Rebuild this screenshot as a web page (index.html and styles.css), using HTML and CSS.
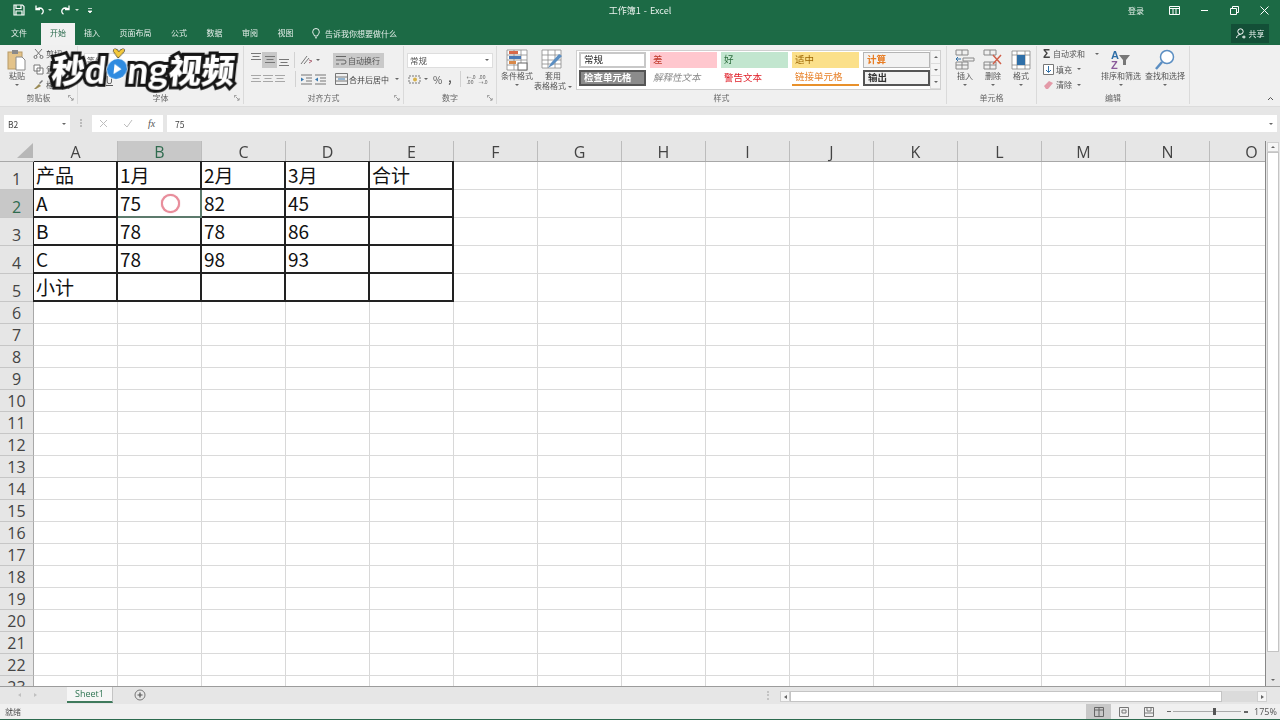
FILE: index.html
```html
<!DOCTYPE html>
<html lang="zh">
<head>
<meta charset="utf-8">
<title>工作簿1 - Excel</title>
<link rel="stylesheet" href="styles.css">
</head>
<body>
<svg class="defs" width="0" height="0">
  <symbol id="lines-c" viewBox="0 0 12 14"><path d="M1 3.500h10M2.500 6.500h7M1 9.500h10" stroke="#777" fill="none"/></symbol>
  <symbol id="launch" viewBox="0 0 7 7"><path d="M.5 3V.5H3M2 2l3.500 3.500M6 3.500V6H3.500" stroke="#777" fill="none" stroke-width=".8"/></symbol>
</svg>
<div class="app">
  <header class="titlebar">
    <div class="qat">
      <svg class="ic" width="12" height="12" viewBox="0 0 12 12"><path d="M1 1h8.500L11 2.500V11H1zM3 1v3.500h5V1M3 11V7h6v4" fill="none" stroke="#fff" stroke-width="1.200"/></svg>
      <svg class="ic undo" width="12" height="12" viewBox="0 0 12 12"><path d="M3 1.500v4h4M3.500 5.300C5 3.600 8 3.600 9.500 5.200c1.300 1.500.9 3.800-1 5" fill="none" stroke="#fff" stroke-width="1.300"/></svg>
      <i class="caret light"></i>
      <svg class="ic redo" width="12" height="12" viewBox="0 0 12 12"><path d="M9 1.500v4H5M8.500 5.300C7 3.600 4 3.600 2.500 5.200c-1.300 1.500-.9 3.800 1 5" fill="none" stroke="#fff" stroke-width="1.300"/></svg>
      <i class="caret light"></i>
      <svg class="ic qatmore" width="6" height="7" viewBox="0 0 6 7"><path d="M1 1.500h4M1 4h4L3 6z" fill="#fff" stroke="#fff" stroke-width=".7"/></svg>
    </div>
    <div class="doc-title">工作簿1 - Excel</div>
    <div class="win">
      <span class="login">登录</span>
      <span class="winbtn"><svg width="11" height="9" viewBox="0 0 11 9"><path d="M.5.500h10v8H.5zM.5 2.500h10M4 2.500v6M7 2.500v6" fill="none" stroke="#fff"/></svg></span>
      <span class="winbtn"><svg width="9" height="9" viewBox="0 0 9 9"><path d="M1 4.500h7" stroke="#fff"/></svg></span>
      <span class="winbtn"><svg width="9" height="9" viewBox="0 0 9 9"><path d="M.5 2.500h6v6h-6zM2.500 2.500V.5h6v6h-2" fill="none" stroke="#fff"/></svg></span>
      <span class="winbtn"><svg width="9" height="9" viewBox="0 0 9 9"><path d="M.5.500l8 8M8.500.500l-8 8" stroke="#fff"/></svg></span>
    </div>
  </header>

  <nav class="tabs">
    <span class="tab">文件</span>
    <span class="tab active">开始</span>
    <span class="tab">插入</span>
    <span class="tab">页面布局</span>
    <span class="tab">公式</span>
    <span class="tab">数据</span>
    <span class="tab">审阅</span>
    <span class="tab">视图</span>
    <span class="tell">
      <svg width="8" height="11" viewBox="0 0 8 11"><path d="M2.500 8C2.300 6.500.7 5.800.7 3.800a3.300 3.300 0 0 1 6.600 0C7.300 5.800 5.700 6.500 5.500 8zM3 9.800h2" fill="none" stroke="#fff" stroke-width=".9"/></svg>
      告诉我你想要做什么
    </span>
    <span class="share">
      <svg width="10" height="11" viewBox="0 0 10 11"><circle cx="4.500" cy="3.500" r="2.700" fill="none" stroke="#fff"/><path d="M.5 10c.4-2.500 2-3.500 4-3.500M6 9h3.500M8 7.500V10.500" fill="none" stroke="#fff"/></svg>
      共享
    </span>
  </nav>

  <section class="ribbon">
    <div class="group g-clip">
      <div class="g-body clip-body">
        <div class="big paste">
          <svg width="20" height="22" viewBox="0 0 20 22"><rect x="1" y="3" width="14" height="17" fill="#e3c38a" stroke="#b89a66"/><rect x="5" y="1" width="6" height="4" fill="#8a8a8a"/><path d="M9 8h6l3 3v10H9z" fill="#fff" stroke="#8a8a8a"/></svg>
          <span>粘贴</span><i class="caret"></i>
        </div>
        <div class="clip-list">
          <span class="li"><svg width="11" height="11" viewBox="0 0 11 11"><path d="M2 1l6 7M9 1L3 8" stroke="#777" fill="none"/><circle cx="2.500" cy="9" r="1.500" fill="none" stroke="#777"/><circle cx="8.500" cy="9" r="1.500" fill="none" stroke="#777"/></svg>剪切</span>
          <span class="li"><svg width="11" height="11" viewBox="0 0 11 11"><path d="M1 1h6v6H1zM4 4h6v6H4z" fill="#fff" stroke="#777"/></svg>复制</span>
          <span class="li"><svg width="11" height="11" viewBox="0 0 11 11"><path d="M1 10l5-5 2 2-5 3z" fill="#9a8a55"/><path d="M6 4l3-3 1 1-3 3z" fill="#777"/></svg>格式刷</span>
        </div>
      </div>
      <div class="g-label"><span>剪贴板</span><svg class="launch"><use href="#launch"/></svg></div>
    </div>

    <div class="group g-font">
      <div class="g-body stack">
        <div class="r"><span class="box fontname">等线</span><span class="box fontsize">11</span></div>
        <div class="r font-tools"><b>B</b><em>I</em><u>U</u><span class="swatch yellow"></span><span class="swatch red"></span></div>
      </div>
      <div class="g-label"><span>字体</span><svg class="launch"><use href="#launch"/></svg></div>
    </div>

    <div class="group g-align">
      <div class="g-body stack">
        <div class="r">
          <svg class="i14 up"><use href="#lines-c"/></svg>
          <span class="pressed"><svg class="i14"><use href="#lines-c"/></svg></span>
          <svg class="i14 down"><use href="#lines-c"/></svg>
          <span class="vsep"></span>
          <svg class="orient" width="15" height="12" viewBox="0 0 15 12"><path d="M2 10L8 2M5 10L10 4" stroke="#777" fill="none"/><path d="M10 9l3-2-3-1" stroke="#b06a7a" fill="none"/></svg>
          <i class="caret"></i>
          <span class="wrap"><svg width="12" height="11" viewBox="0 0 12 11"><path d="M1 1.500h10M1 5h8a2 2 0 0 1 0 4H6M1 9h3" stroke="#666" fill="none"/></svg>自动换行</span>
        </div>
        <div class="r">
          <svg class="i14 faint"><use href="#lines-c"/></svg>
          <svg class="i14 faint"><use href="#lines-c"/></svg>
          <svg class="i14 faint"><use href="#lines-c"/></svg>
          <span class="vsep gap-b"></span>
          <svg width="13" height="11" viewBox="0 0 13 11"><path d="M1 1h11M6 4h6M6 7h6M1 10h11" stroke="#777" fill="none"/><path d="M1 3.500l3 2-3 2z" fill="#3a7ab0"/></svg>
          <svg class="mla" width="13" height="11" viewBox="0 0 13 11"><path d="M1 1h11M6 4h6M6 7h6M1 10h11" stroke="#777" fill="none"/><path d="M4 3.500l-3 2 3 2z" fill="#3a7ab0"/></svg>
          <span class="merge"><svg width="13" height="12" viewBox="0 0 13 12"><path d="M.5.500h12v11H.5zM.5 4h12M.5 8h12" fill="none" stroke="#777"/><path d="M3 6h7" stroke="#3a7ab0"/></svg>合并后居中</span>
          <i class="caret"></i>
        </div>
      </div>
      <div class="g-label"><span>对齐方式</span><svg class="launch"><use href="#launch"/></svg></div>
    </div>

    <div class="group g-num">
      <div class="g-body stack">
        <div class="r"><span class="box numfmt">常规<i class="caret"></i></span></div>
        <div class="r num-tools">
          <svg width="13" height="11" viewBox="0 0 13 11"><path d="M1 2h11v7H1z" fill="none" stroke="#777" stroke-dasharray="2 1"/><circle cx="7" cy="5.500" r="2" fill="#d8b24a"/></svg>
          <i class="caret"></i>
          <span class="pct">%</span>
          <span class="comma">,</span>
          <span class="vsep"></span>
          <span class="dec">←.0<br>.00</span>
          <span class="dec">.00<br>→.0</span>
        </div>
      </div>
      <div class="g-label"><span>数字</span><svg class="launch"><use href="#launch"/></svg></div>
    </div>

    <div class="group g-style">
      <div class="g-body style-body">
        <div class="big w36">
          <svg width="22" height="22" viewBox="0 0 22 22"><path d="M1 1h20v20H1zM1 6h20M1 11h20M1 16h20M8 1v20M15 1v20" fill="#fff" stroke="#8a8a8a" stroke-width=".8"/><rect x="3" y="2" width="9" height="3" fill="#d9694a"/><rect x="3" y="7" width="12" height="3" fill="#4a7ab8"/><rect x="3" y="12" width="7" height="3" fill="#d9894a"/><rect x="12" y="14" width="9" height="7" fill="#fff" stroke="#666"/></svg>
          <span>条件格式</span><i class="caret"></i>
        </div>
        <div class="big w36 two">
          <svg width="24" height="22" viewBox="0 0 24 22"><path d="M1 1h19v18H1zM1 6h19M1 11h19M1 15h19M7 1v18M14 1v18" fill="#fff" stroke="#8a8a8a" stroke-width=".8"/><path d="M7 19l3-5 8-9 3 2-9 9z" fill="#5b8ec2"/></svg>
          <span>套用</span><span class="nowrap">表格格式 <i class="caret"></i></span>
        </div>
        <div class="gallery">
          <div class="cells">
            <span class="st st-normal">常规</span>
            <span class="st st-bad">差</span>
            <span class="st st-good">好</span>
            <span class="st st-mid">适中</span>
            <span class="st st-calc">计算</span>
            <span class="st st-check">检查单元格</span>
            <span class="st st-note">解释性文本</span>
            <span class="st st-warn">警告文本</span>
            <span class="st st-link">链接单元格</span>
            <span class="st st-out">输出</span>
          </div>
          <div class="gal-scroll"><span><i class="caret up-c"></i></span><span><i class="caret"></i></span><span><i class="caret"></i></span></div>
        </div>
      </div>
      <div class="g-label center"><span>样式</span></div>
    </div>

    <div class="group g-cells">
      <div class="g-body cell-body">
        <div class="big w28">
          <svg width="20" height="22" viewBox="0 0 20 22"><path d="M1 1h12v5H1zM1 13h12v7H1zM7 1v5M7 13v7M1 16h12" fill="none" stroke="#888"/><path d="M8 9h11v3H8z" fill="none" stroke="#888"/><path d="M1 10h5M3 8l-2 2 2 2" stroke="#2f6fa8" fill="none"/></svg>
          <span>插入</span><i class="caret"></i>
        </div>
        <div class="big w28">
          <svg width="20" height="22" viewBox="0 0 20 22"><path d="M1 1h12v5H1zM1 13h12v7H1zM7 1v5M7 13v7M1 16h12" fill="none" stroke="#888"/><path d="M10 6l8 9M18 6l-8 9" stroke="#d0604a" stroke-width="1.500"/></svg>
          <span>删除</span><i class="caret"></i>
        </div>
        <div class="big w28">
          <svg width="20" height="22" viewBox="0 0 20 22"><path d="M1 2h18v18H1zM1 6h18M1 16h18M6 2v18M14 2v18" fill="#fff" stroke="#888" stroke-width=".8"/><rect x="6" y="6" width="8" height="10" fill="#2f6fa8"/></svg>
          <span>格式</span><i class="caret"></i>
        </div>
      </div>
      <div class="g-label center"><span>单元格</span></div>
    </div>

    <div class="group g-edit">
      <div class="g-body edit-body">
        <div class="edit-list">
          <span class="li"><span class="sigma">Σ</span>自动求和<i class="caret m8"></i></span>
          <span class="li"><svg width="11" height="11" viewBox="0 0 11 11"><path d="M.5.500h10v10H.5z" fill="#fff" stroke="#777"/><path d="M5.500 2v6M3 6l2.500 2.500L8 6" stroke="#2f6fa8" fill="none"/></svg>填充<i class="caret"></i></span>
          <span class="li"><svg width="11" height="11" viewBox="0 0 11 11"><path d="M1 7l5-5 4 2-5 6H3z" fill="#e39aa8"/></svg>清除<i class="caret"></i></span>
        </div>
        <div class="big w44">
          <svg width="22" height="22" viewBox="0 0 22 22"><text x="1" y="10" class="az a">A</text><text x="1" y="20" class="az z">Z</text><path d="M9 6h11l-4 5v5h-3v-5z" fill="#777"/></svg>
          <span>排序和筛选</span><i class="caret"></i>
        </div>
        <div class="big w44">
          <svg width="22" height="22" viewBox="0 0 22 22"><circle cx="13" cy="8" r="6.500" fill="#fff" stroke="#5b8ec2" stroke-width="1.500"/><path d="M8 13l-6 7" stroke="#5b8ec2" stroke-width="2.500"/></svg>
          <span>查找和选择</span><i class="caret"></i>
        </div>
      </div>
      <div class="g-label center"><span>编辑</span></div>
    </div>

    <div class="collapse"><svg width="7" height="5" viewBox="0 0 7 5"><path d="M1 4l2.500-2.500L6 4" fill="none" stroke="#555"/></svg></div>
  </section>

  <section class="formula">
    <div class="namebox"><span>B2</span><i class="caret"></i></div>
    <div class="dots"></div>
    <div class="fx-btns">
      <svg width="9" height="9" viewBox="0 0 9 9"><path d="M1 1l7 7M8 1L1 8" stroke="#bdbdbd"/></svg>
      <svg width="10" height="9" viewBox="0 0 10 9"><path d="M1 5l3 3 5-7" stroke="#bdbdbd" fill="none"/></svg>
      <span class="fx">fx</span>
    </div>
    <div class="input"><span>75</span><i class="caret"></i></div>
  </section>

  <main class="sheet-wrap">
    <div class="sheet">
      <div class="head">
        <div class="corner"><span class="tri"></span></div>
        <div class="ch">A</div><div class="ch sel">B</div><div class="ch">C</div><div class="ch">D</div><div class="ch">E</div>
        <div class="ch">F</div><div class="ch">G</div><div class="ch">H</div><div class="ch">I</div><div class="ch">J</div>
        <div class="ch">K</div><div class="ch">L</div><div class="ch">M</div><div class="ch">N</div><div class="ch">O</div>
      </div>
      <div class="row tall"><div class="rh">1</div><div class="c">产品</div><div class="c">1月</div><div class="c">2月</div><div class="c">3月</div><div class="c">合计</div><div class="fill"></div></div>
      <div class="row tall"><div class="rh sel">2</div><div class="c">A</div><div class="c active-cell">75<span class="cursor"></span></div><div class="c">82</div><div class="c">45</div><div class="c"></div><div class="fill"></div></div>
      <div class="row tall"><div class="rh">3</div><div class="c">B</div><div class="c">78</div><div class="c">78</div><div class="c">86</div><div class="c"></div><div class="fill"></div></div>
      <div class="row tall"><div class="rh">4</div><div class="c">C</div><div class="c">78</div><div class="c">98</div><div class="c">93</div><div class="c"></div><div class="fill"></div></div>
      <div class="row tall"><div class="rh">5</div><div class="c">小计</div><div class="c"></div><div class="c"></div><div class="c"></div><div class="c"></div><div class="fill"></div></div>
      <div class="row"><div class="rh">6</div><div class="fill full"></div></div>
      <div class="row"><div class="rh">7</div><div class="fill full"></div></div>
      <div class="row"><div class="rh">8</div><div class="fill full"></div></div>
      <div class="row"><div class="rh">9</div><div class="fill full"></div></div>
      <div class="row"><div class="rh">10</div><div class="fill full"></div></div>
      <div class="row"><div class="rh">11</div><div class="fill full"></div></div>
      <div class="row"><div class="rh">12</div><div class="fill full"></div></div>
      <div class="row"><div class="rh">13</div><div class="fill full"></div></div>
      <div class="row"><div class="rh">14</div><div class="fill full"></div></div>
      <div class="row"><div class="rh">15</div><div class="fill full"></div></div>
      <div class="row"><div class="rh">16</div><div class="fill full"></div></div>
      <div class="row"><div class="rh">17</div><div class="fill full"></div></div>
      <div class="row"><div class="rh">18</div><div class="fill full"></div></div>
      <div class="row"><div class="rh">19</div><div class="fill full"></div></div>
      <div class="row"><div class="rh">20</div><div class="fill full"></div></div>
      <div class="row"><div class="rh">21</div><div class="fill full"></div></div>
      <div class="row"><div class="rh">22</div><div class="fill full"></div></div>
      <div class="row"><div class="rh">23</div><div class="fill full"></div></div>
    </div>
    <div class="vscroll">
      <span class="sb-btn"><i class="caret up-c"></i></span>
      <span class="v-thumb"></span>
      <span class="sb-btn"><i class="caret"></i></span>
    </div>
  </main>

  <section class="tabbar">
    <div class="sheet-nav"><i class="tri-l"></i><i class="tri-r"></i></div>
    <div class="sheet-tab">Sheet1</div>
    <svg class="addsheet" width="12" height="12" viewBox="0 0 12 12"><circle cx="6" cy="6" r="5" fill="none" stroke="#777"/><path d="M3.500 6h5M6 3.500v5" stroke="#555" stroke-width="1.200"/></svg>
    <div class="hdots"></div>
    <div class="hscroll">
      <span class="h-btn"><i class="tri-l dark"></i></span>
      <span class="h-thumb"></span>
      <span class="h-btn"><i class="tri-r dark"></i></span>
    </div>
  </section>

  <footer class="status">
    <span class="ready">就绪</span>
    <div class="views">
      <span class="view on"><svg width="10" height="10" viewBox="0 0 10 10"><path d="M.5.500h9v9h-9zM.5 3h9M5 .5v9" fill="none" stroke="#666"/></svg></span>
      <span class="view"><svg width="10" height="10" viewBox="0 0 10 10"><path d="M.5.500h9v9h-9zM3 3h4v3H3z" fill="none" stroke="#777"/></svg></span>
      <span class="view"><svg width="10" height="10" viewBox="0 0 10 10"><path d="M.5.500h9v9h-9zM.5 6h9M3 .5V4h4V.5" fill="none" stroke="#777"/></svg></span>
    </div>
    <div class="zoom"><span class="zsign"></span><span class="ztrack"><i></i></span><span class="zsign plus"></span><span class="zpct">175%</span></div>
  </footer>
  <div class="baseline"></div>

  <div class="logo" aria-label="秒dong视频">
    <span class="cjk">秒</span><span class="lat">d</span><span class="play"><svg width="22" height="32" viewBox="0 0 22 32"><path d="M7 1c1.500 0 3 1.500 4 3 1-1.500 2.500-3 4-3s2 2 0 4l-4 5-4-5c-2-2-1.500-4 0-4z" fill="#f4c93c" stroke="#111" stroke-width="1"/><circle cx="11" cy="21" r="10" fill="#2f8be0" stroke="#fff" stroke-width="1.500"/><path d="M8 16l7.500 5L8 26z" fill="#fff"/></svg></span><span class="lat">ng</span><span class="cjk">视频</span>
  </div>
</div>
</body>
</html>
```

FILE: styles.css
```css
* { box-sizing: border-box; }
html, body { margin: 0; padding: 0; }
body { background: #fff; font-family: "Noto Sans CJK SC", "Noto Sans", sans-serif; }
.defs { position: absolute; }
.app { position: relative; width: 1280px; height: 720px; overflow: hidden; display: flex; flex-direction: column; }
i { display: inline-block; }
.caret { width: 0; height: 0; border-top: 2.500px solid #666; border-left: 2px solid transparent; border-right: 2px solid transparent; }
.caret.light { border-top-color: #cfe0d6; margin-left: 3px; }
.caret.up-c { border-top: 0; border-bottom: 2.500px solid #666; }

/* Title */
.titlebar { height: 23px; padding-bottom: 3px; background: #1c6a45; color: #e8f1ec; display: grid; grid-template-columns: 1fr auto 1fr; align-items: center; font-size: 8px; filter: blur(.3px); }
.qat { display: flex; align-items: center; padding-left: 13px; }
.undo { margin-left: 8px; }
.redo { margin-left: 8px; }
.qatmore { margin-left: 8px; }
.doc-title { font-size: 9px; word-spacing: 1px; }
.win { display: flex; justify-content: flex-end; align-items: center; padding-right: 1px; }
.login { width: 16px; margin-right: 15px; }
.winbtn { width: 30px; display: flex; justify-content: center; }

/* Tabs */
.tabs { height: 22px; background: #1c6a45; color: #e4eee9; display: flex; align-items: flex-start; gap: 19.500px; padding-left: 11px; font-size: 8px; filter: blur(.3px); }
.tab { line-height: 20px; white-space: nowrap; }
.tab.active { background: #f1f1f1; color: #2a6a4c; padding: 0 9px 2px; margin: 0 -10.500px 0 -5.500px; }
.tell { display: flex; align-items: center; height: 20px; gap: 5px; margin-left: -1px; }
.share { margin-left: auto; margin-right: 11px; width: 38px; height: 19px; background: #134f37; display: flex; align-items: center; justify-content: center; gap: 3px; margin-top: 1px; }

/* Ribbon */
.ribbon { height: 62px; background: #f0f0f0; display: flex; font-size: 8px; color: #555; filter: blur(.35px); border-bottom: 1px solid #dcdcdc; }
.group { display: flex; flex-direction: column; border-right: 1px solid #dadada; margin: 1px 0 2px; }
.g-body { height: 48px; }
.g-label { height: 12px; position: relative; display: flex; justify-content: center; align-items: center; color: #666; line-height: 12px; }
.launch { position: absolute; right: 3px; top: 3px; width: 6px; height: 6px; }
.g-clip { width: 78px; }
.g-font { width: 166px; }
.g-align { width: 160px; }
.g-num { width: 93px; }
.g-style { width: 450px; }
.g-cells { width: 90px; }
.g-edit { width: 153px; }
.collapse { flex: 1; display: flex; justify-content: flex-end; align-items: flex-end; padding: 0 6px 5px 0; }
.big { display: flex; flex-direction: column; align-items: center; padding-top: 3px; line-height: 10px; white-space: nowrap; gap: 0; }
.big .caret { margin-top: 3px; }
.nowrap .caret { margin: 0 0 1px; }
.w28 { width: 28px; } .w36 { width: 36px; } .w44 { width: 44px; }
.clip-body { display: flex; padding-left: 7px; }
.paste { width: 20px; }
.clip-list, .edit-list { display: flex; flex-direction: column; gap: 2.500px; padding-top: 1px; }
.clip-list { margin-left: 6px; }
.li { display: flex; align-items: center; gap: 2px; height: 13px; white-space: nowrap; }
.li .caret { margin-left: 3px; }
.li .caret.m8 { margin-left: 8px; }
.stack { display: flex; flex-direction: column; gap: 3px; padding-top: 6px; }
.r { display: flex; align-items: center; height: 16px; }
.g-font .stack { padding-left: 6px; }
.g-align .stack { padding-left: 6px; }
.g-num .stack { padding-left: 3px; }
.box { background: #fff; border: 1px solid #dedede; height: 15px; display: flex; align-items: center; padding-left: 2px; }
.fontname { width: 96px; }
.fontsize { width: 30px; margin-left: 3px; }
.font-tools { gap: 6px; font-size: 10px; }
.swatch { width: 12px; height: 3px; margin-top: 10px; }
.swatch.yellow { background: #e8d84a; margin-left: 52px; }
.swatch.red { background: #c8282a; margin-left: 6px; }
.i14 { width: 12px; height: 14px; flex: none; }
.i14.up { margin-top: -6px; }
.i14.down { margin-top: 6px; margin-left: 1px; }
.i14.faint { opacity: .6; }
.pressed { width: 15px; height: 16px; background: #c8c8c8; display: flex; align-items: center; justify-content: center; }
.vsep { width: 1px; height: 16px; background: #d2d2d2; margin: 0 4px 0 4px; flex: none; }
.vsep.gap-b { margin-left: 9px; margin-right: 4px; }
.orient { flex: none; }
.orient + .caret { margin-left: 2px; }
.wrap { margin-left: 13px; width: 51px; height: 15px; background: #c9c9c9; display: flex; align-items: center; gap: 1px; padding-left: 2px; white-space: nowrap; }
.mla { margin-left: 1px; }
.merge { margin-left: 8px; display: flex; align-items: center; gap: 1px; white-space: nowrap; color: #444; }
.merge + .caret { margin-left: 6px; }
.numfmt { width: 86px; justify-content: space-between; padding-right: 3px; font-size: 8.500px; }
.num-tools { padding-left: 1px; }
.num-tools .caret { margin-left: 3px; }
.pct { font-size: 10px; margin-left: 5px; }
.comma { font-size: 10px; font-weight: 700; margin-left: 6px; margin-top: -3px; }
.num-tools .vsep { margin: 0 5px 0 9px; }
.dec { font-size: 5px; line-height: 5px; width: 12px; color: #666; white-space: nowrap; }
.style-body { display: flex; padding-left: 2px; }
.gallery { display: flex; width: 365px; height: 40px; margin: 4px 0 0 5px; background: #fff; border: 1px solid #cfcfcf; padding: 1px 0 1px 2px; }
.cells { display: grid; grid-template-columns: repeat(5, 67px); grid-auto-rows: 16px; gap: 2px 4px; font-size: 9.500px; width: 351px; }
.st { display: flex; align-items: center; padding-left: 3px; white-space: nowrap; line-height: 1; }
.st-normal { border: 2px solid #c8c8c8; color: #222; }
.st-bad { background: #ffc7ce; color: #c0392b; }
.st-good { background: #c2e6cf; color: #2a6a3a; }
.st-mid { background: #fbe08a; color: #9c6500; }
.st-calc { background: #f2f2f2; border: 1px solid #b5b5b5; color: #e87d24; font-weight: 700; }
.st-check { background: #8c8c8c; border: 2px solid #555; color: #fff; font-weight: 700; }
.st-note { color: #8a8a8a; font-style: italic; }
.st-warn { color: #e0202a; }
.st-link { color: #e8822a; border-bottom: 2px solid #e8902a; }
.st-out { background: #f2f2f2; border: 2px solid #555; color: #333; font-weight: 700; }
.gal-scroll { width: 10px; display: flex; flex-direction: column; border-left: 1px solid #dcdcdc; margin-top: -1px; margin-bottom: -1px; }
.gal-scroll span { flex: 1; display: flex; align-items: center; justify-content: center; background: #f4f4f4; border-bottom: 1px solid #dcdcdc; }
.cell-body { display: flex; padding-left: 4px; }
.edit-body { display: flex; padding-left: 6px; }
.edit-list { width: 56px; }
.sigma { font-size: 12px; font-weight: 700; width: 11px; line-height: 10px; color: #444; font-family: "Liberation Sans", sans-serif; }
.az { font: 700 11px "Liberation Sans", sans-serif; }
.az.a { fill: #2f6fa8; }
.az.z { fill: #8a5a9a; }

/* Formula */
.formula { height: 34px; background: #e6e6e6; padding: 8px 3px 9px 4px; display: flex; font-size: 8.500px; color: #444; }
.namebox { width: 66px; background: #fff; display: flex; align-items: center; justify-content: space-between; padding: 0 4px; filter: blur(.3px); }
.dots { width: 2px; height: 8px; margin: 4px 10px; border-left: 2px dotted #bbb; }
.fx-btns { width: 71px; background: #fff; display: flex; align-items: center; gap: 15px; padding-left: 7px; }
.fx { font: italic 10px "Liberation Serif", serif; color: #555; }
.input { flex: 1; margin-left: 4px; background: #fff; display: flex; align-items: center; justify-content: space-between; padding: 0 4px 0 8px; filter: blur(.3px); }

/* Sheet */
.sheet-wrap { height: 545px; display: flex; background: #e6e6e6; }
.sheet { width: 1266px; height: 545px; overflow: hidden; background: #fff; position: relative; border-right: 1px solid #888; }
.head { display: flex; height: 21px; background: #e6e6e6; border-bottom: 1px solid #a8a8a8; }
.corner { width: 34px; flex: none; position: relative; }
.tri { display: block; position: absolute; right: 1px; bottom: 3px; width: 0; height: 0; border-left: 16px solid transparent; border-bottom: 15px solid #b7b7b7; }
.ch { width: 84px; flex: none; text-align: center; font: 16px/22px "Open Sans", sans-serif; color: #444; border-right: 1px solid #bcbcbc; filter: blur(.25px); }
.ch.sel { background: #c8c8c8; color: #2f6b4f; }
.row { display: flex; height: 22px; }
.row.tall { height: 28px; }
.rh { width: 34px; flex: none; background: #e6e6e6; border-right: 1px solid #a8a8a8; border-bottom: 1px solid #c6c6c6; text-align: center; font: 16px/22px "Open Sans", sans-serif; color: #444; }
.tall .rh { line-height: 34px; }
.rh.sel { background: #c8c8c8; color: #2f6b4f; }
.c { width: 84px; flex: none; border-right: 2px solid #222; border-bottom: 2px solid #222; padding-left: 2px; font-size: 19px; line-height: 25px; color: #111; position: relative; white-space: nowrap; }
.tall:nth-child(2) .c { box-shadow: 0 -1px 0 #222; }
.tall .c:nth-child(2) { box-shadow: -1px 0 0 #222; }
.tall:nth-child(2) .c:nth-child(2) { box-shadow: -1px 0 0 #222, 0 -1px 0 #222; }
.active-cell { border-right-color: #5c7a6c; border-bottom-color: #5c7a6c; }
.cursor { position: absolute; left: 43px; top: 4px; width: 19px; height: 19px; border-radius: 50%; border: 2.500px solid #e98e9c; box-shadow: 0 0 1px #d86a7c; background: #fff; }
.fill { flex: 1; border-bottom: 1px solid #dadada; background: repeating-linear-gradient(to right, transparent 0 83px, #d8d8d8 83px 84px); }

/* Scrollbar */
.vscroll { flex: 1; display: flex; flex-direction: column; padding: 1px 1px 0 1px; }
.sb-btn { height: 10px; display: flex; align-items: center; justify-content: center; background: #f6f6f6; border: 1px solid #cfcfcf; flex: none; }
.v-thumb { height: 500px; background: #fff; border: 1px solid #c4c4c4; flex: none; }
.vscroll .sb-btn:last-child { margin-top: auto; background: #e6e6e6; border: 0; height: 12px; }

/* Tab bar */
.tabbar { height: 18px; background: #e6e6e6; border-top: 1px solid #9c9c9c; display: flex; align-items: flex-start; }
.sheet-nav { width: 67px; display: flex; gap: 13px; padding: 6px 0 0 18px; }
.tri-l { width: 0; height: 0; border-right: 3px solid #c0c0c0; border-top: 2.500px solid transparent; border-bottom: 2.500px solid transparent; }
.tri-r { width: 0; height: 0; border-left: 3px solid #c0c0c0; border-top: 2.500px solid transparent; border-bottom: 2.500px solid transparent; }
.tri-l.dark { border-right-color: #666; }
.tri-r.dark { border-left-color: #666; }
.sheet-tab { width: 46px; height: 16px; background: #f6f6f6; border-bottom: 2px solid #3f7a5c; border-right: 1px solid #c4c4c4; text-align: center; font: 9px/14px "Open Sans", sans-serif; color: #2f7553; filter: blur(.2px); }
.addsheet { margin: 2px 0 0 21px; }
.hdots { width: 2px; height: 9px; margin: 4px 0 0 621px; border-left: 2px dotted #c4c4c4; }
.hscroll { width: 487px; height: 11px; margin: 4px 0 0 11px; display: flex; background: #dbdbdb; }
.h-btn { width: 10px; background: #f6f6f6; border: 1px solid #cfcfcf; display: flex; align-items: center; justify-content: center; flex: none; }
.h-thumb { width: 432px; background: #fff; border: 1px solid #c4c4c4; margin-right: auto; flex: none; }

/* Status */
.status { height: 15px; background: #f0f0f0; display: flex; align-items: center; font-size: 8px; color: #555; filter: blur(.2px); }
.ready { margin-left: 5px; }
.views { margin-left: auto; display: flex; align-items: center; height: 15px; }
.view { width: 25px; height: 15px; display: flex; align-items: center; justify-content: center; }
.view.on { background: #c8c8c8; }
.zoom { display: flex; align-items: center; margin: 0 5px 0 4px; width: 110px; }
.zsign { width: 4px; height: 1px; background: #666; margin-left: 2px; position: relative; flex: none; }
.zsign.plus { margin-left: 3px; height: 2px; }
.ztrack { width: 68px; height: 1px; background: #aaa; position: relative; margin-left: 2px; flex: none; }
.ztrack i { position: absolute; left: 40px; top: -3px; width: 3px; height: 7px; background: #555; }
.zpct { margin-left: 6px; font: 9px "Open Sans", sans-serif; color: #555; white-space: nowrap; }
.baseline { height: 1px; background: #2c6a4e; }

/* Watermark */
.logo { position: absolute; left: 52px; top: 46px; height: 46px; display: flex; align-items: center; color: #fff; transform: skewX(-6deg); white-space: nowrap; filter: blur(.3px); }
.logo span { -webkit-text-stroke: 6px #151515; paint-order: stroke fill; }
.cjk { font: 900 33px/46px "Noto Sans CJK SC", sans-serif; }
.lat { font: 700 38px/46px "Lato", sans-serif; }
.play { display: flex; margin: -10px 0 0 -1px; position: relative; z-index: 1; }
```
